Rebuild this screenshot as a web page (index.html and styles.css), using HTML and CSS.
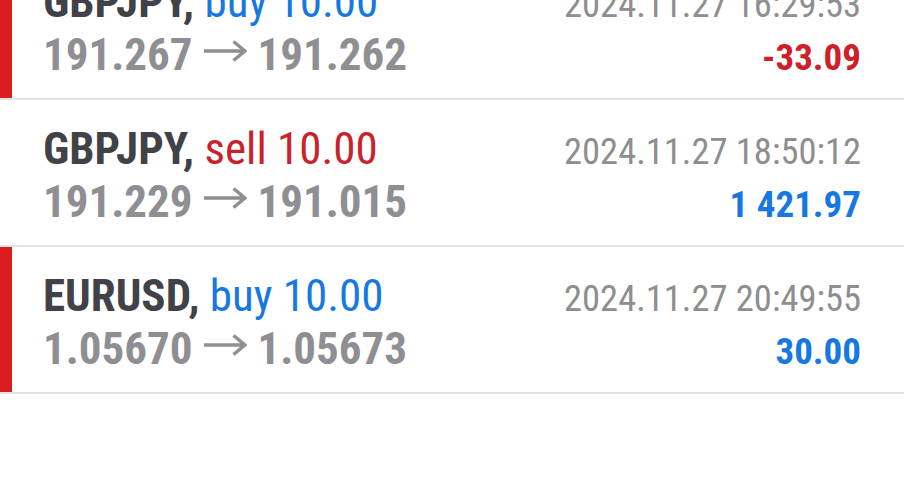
FILE: index.html
```html
<!DOCTYPE html>
<html lang="en">
<head>
<meta charset="utf-8">
<title>History</title>
<link rel="stylesheet" href="styles.css">
</head>
<body>
<div class="list">
  <div class="deal mark">
    <div class="title"><span class="sym">GBPJPY,</span> <span class="buy">buy 10.00</span></div>
    <div class="time">2024.11.27 16:29:53</div>
    <div class="price">191.267<svg class="arrow" viewBox="0 0 43 22" aria-label="→"><path d="M0 11H40.5M29.5 1.5L41 11L29.5 20.5"/></svg>191.262</div>
    <div class="profit loss">-33.09</div>
  </div>
  <div class="deal">
    <div class="title"><span class="sym">GBPJPY,</span> <span class="sell">sell 10.00</span></div>
    <div class="time">2024.11.27 18:50:12</div>
    <div class="price">191.229<svg class="arrow" viewBox="0 0 43 22" aria-label="→"><path d="M0 11H40.5M29.5 1.5L41 11L29.5 20.5"/></svg>191.015</div>
    <div class="profit gain">1 421.97</div>
  </div>
  <div class="deal mark">
    <div class="title"><span class="sym">EURUSD,</span> <span class="buy">buy 10.00</span></div>
    <div class="time">2024.11.27 20:49:55</div>
    <div class="price">1.05670<svg class="arrow" viewBox="0 0 43 22" aria-label="→"><path d="M0 11H40.5M29.5 1.5L41 11L29.5 20.5"/></svg>1.05673</div>
    <div class="profit gain">30.00</div>
  </div>
</div>
</body>
</html>
```
FILE: styles.css
```css
html, body {
  margin: 0;
  padding: 0;
  background: #ffffff;
  overflow: hidden;
}
body {
  font-family: "Roboto Condensed", Roboto, "Liberation Sans", sans-serif;
  width: 904px;
  height: 480px;
}
.list {
  margin-top: -47px;
}
.deal {
  display: grid;
  grid-template-columns: 1fr auto;
  grid-template-rows: 53px 53px;
  align-items: baseline;
  height: 147px;
  box-sizing: border-box;
  padding: 21.5px 43px 0 43px;
  border-bottom: 2.5px solid #e4e4e4;
}
.deal.mark {
  box-shadow: inset 12px 0 0 #d91d22;
}
.title {
  font-size: 45px;
  line-height: 53px;
}
.sym {
  font-weight: 700;
  color: #414148;
}
.buy {
  color: #1678e0;
}
.sell {
  color: #c9222a;
}
.price {
  font-size: 45px;
  line-height: 53px;
  font-weight: 700;
  color: #8e8e93;
  white-space: nowrap;
}
.arrow {
  width: 43px;
  height: 22px;
  margin: 0 11px 0 11px;
  vertical-align: 7.5px;
  fill: none;
  stroke: #8e8e93;
  stroke-width: 3.5;
}
.time {
  font-size: 36.5px;
  line-height: 53px;
  color: #8e8e8e;
  text-align: right;
}
.profit {
  font-size: 37px;
  line-height: 53px;
  font-weight: 700;
  text-align: right;
}
.loss {
  color: #cf2027;
}
.gain {
  color: #1678e0;
}
```
